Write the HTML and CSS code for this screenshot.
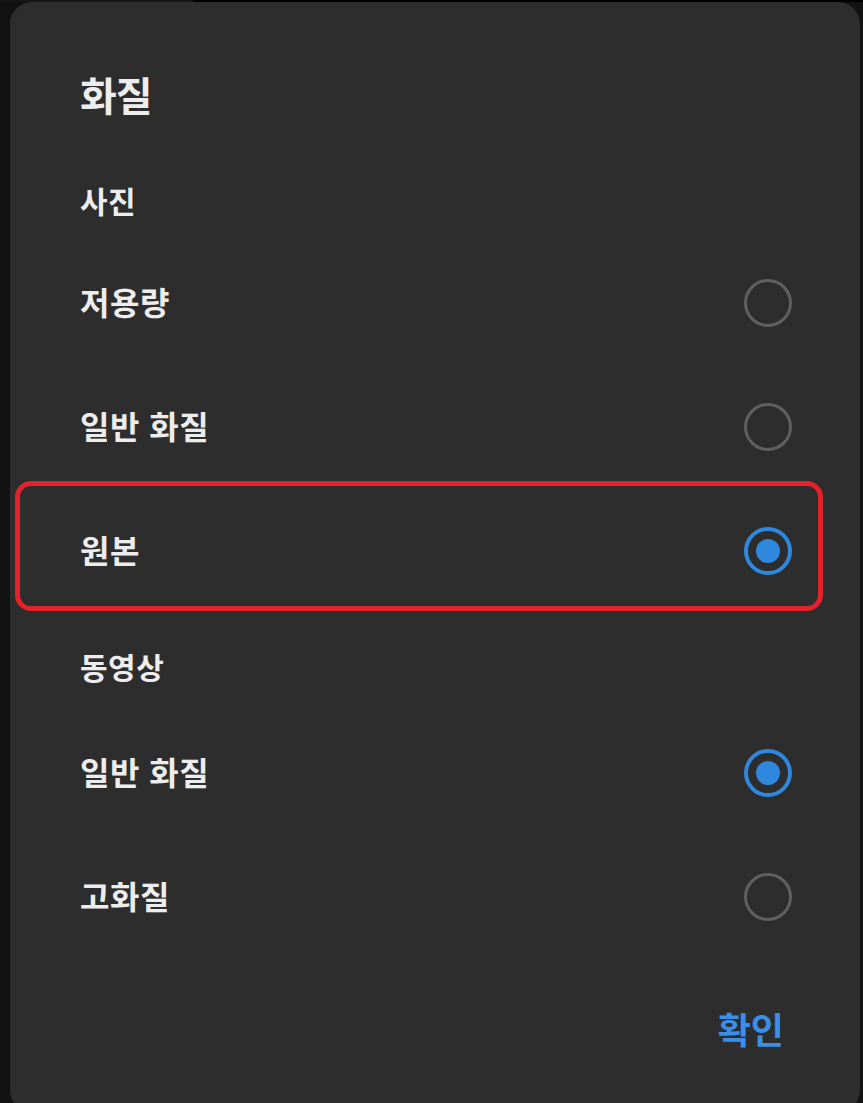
FILE: index.html
```html
<!DOCTYPE html>
<html lang="ko">
<head>
<meta charset="utf-8">
<title>화질</title>
<link rel="stylesheet" href="styles.css">
</head>
<body>
<div class="topstrip"><div class="topstrip-left"></div><div class="topstrip-right"></div></div>
<div class="dialog">
  <h1 class="title">화질</h1>
  <div class="section">사진</div>
  <div class="row"><span class="label">저용량</span><span class="radio"></span></div>
  <div class="row"><span class="label">일반 화질</span><span class="radio"></span></div>
  <div class="row row-highlight"><span class="label">원본</span><span class="radio radio-on"><span class="dot"></span></span></div>
  <div class="section section-second">동영상</div>
  <div class="row"><span class="label">일반 화질</span><span class="radio radio-on"><span class="dot"></span></span></div>
  <div class="row"><span class="label">고화질</span><span class="radio"></span></div>
  <div class="actions"><span class="confirm">확인</span></div>
</div>
</body>
</html>
```
FILE: styles.css
```css
html, body {
  margin: 0;
  padding: 0;
  height: 100%;
  overflow: hidden;
}
body {
  background: #121212;
  font-family: "Noto Sans CJK KR", "Noto Sans", sans-serif;
  color: #ededed;
}
.topstrip {
  display: flex;
  height: 2px;
}
.topstrip-left {
  width: 193px;
  background: #151515;
}
.topstrip-right {
  flex: 1;
  background: #000;
}
.dialog {
  margin-left: 10px;
  width: 850px;
  height: 1110px;
  box-sizing: border-box;
  background: #2d2d2d;
  border-radius: 22px;
  padding: 68px 68px 0 70px;
}
.title {
  margin: 0 0 62px;
  font-size: 40px;
  line-height: 48px;
  font-weight: 700;
  letter-spacing: -1px;
}
.section {
  font-size: 30px;
  line-height: 40px;
  font-weight: 700;
  margin-bottom: 21px;
  letter-spacing: 0.5px;
}
.section-second {
  margin-top: 33px;
  margin-bottom: 25px;
}
.row {
  height: 124px;
  display: flex;
  align-items: center;
  justify-content: space-between;
  position: relative;
}
.label {
  font-size: 32px;
  font-weight: 700;
  line-height: 40px;
  padding-bottom: 4px;
  letter-spacing: 0.5px;
}
.radio {
  width: 48px;
  height: 48px;
  box-sizing: border-box;
  border: 3.5px solid #606060;
  border-radius: 50%;
  display: flex;
  align-items: center;
  justify-content: center;
}
.radio-on {
  border: 4px solid #2f88de;
}
.dot {
  width: 24px;
  height: 24px;
  border-radius: 50%;
  background: #2f88de;
}
.row-highlight::after {
  content: "";
  position: absolute;
  left: -65px;
  right: -31px;
  top: -8px;
  bottom: 2px;
  border: 5px solid #e3222b;
  border-radius: 16px;
  pointer-events: none;
}
.actions {
  display: flex;
  justify-content: flex-end;
  margin-top: 47px;
  padding-right: 8px;
}
.confirm {
  font-size: 36px;
  line-height: 44px;
  font-weight: 700;
  color: #3a8fe6;
}
```
